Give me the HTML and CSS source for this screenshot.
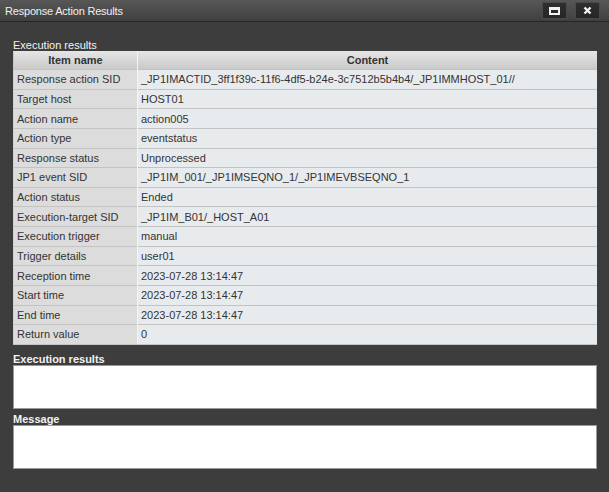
FILE: index.html
```html
<!DOCTYPE html>
<html>
<head>
<meta charset="utf-8">
<link rel="stylesheet" href="styles.css">
</head>
<body>
<div class="window">
  <div class="titlebar">
    <span class="title">Response Action Results</span>
    <div class="tbtns">
      <div class="tbtn"><span class="max-ico"></span></div>
      <div class="tbtn">
        <svg width="9" height="9" viewBox="0 0 9 9"><path d="M1.5 1.5 L7.5 7.5 M7.5 1.5 L1.5 7.5" stroke="#f2f2f2" stroke-width="2.4" stroke-linecap="butt"/></svg>
      </div>
    </div>
  </div>
  <div class="content">
    <div class="label top-label">Execution results</div>
    <table class="grid">
      <thead>
        <tr><th class="c1">Item name</th><th>Content</th></tr>
      </thead>
      <tbody>
        <tr><td class="c1">Response action SID</td><td>_JP1IMACTID_3ff1f39c-11f6-4df5-b24e-3c7512b5b4b4/_JP1IMMHOST_01//</td></tr>
        <tr><td class="c1">Target host</td><td>HOST01</td></tr>
        <tr><td class="c1">Action name</td><td>action005</td></tr>
        <tr><td class="c1">Action type</td><td>eventstatus</td></tr>
        <tr><td class="c1">Response status</td><td>Unprocessed</td></tr>
        <tr><td class="c1">JP1 event SID</td><td>_JP1IM_001/_JP1IMSEQNO_1/_JP1IMEVBSEQNO_1</td></tr>
        <tr><td class="c1">Action status</td><td>Ended</td></tr>
        <tr><td class="c1">Execution-target SID</td><td>_JP1IM_B01/_HOST_A01</td></tr>
        <tr><td class="c1">Execution trigger</td><td>manual</td></tr>
        <tr><td class="c1">Trigger details</td><td>user01</td></tr>
        <tr><td class="c1">Reception time</td><td>2023-07-28 13:14:47</td></tr>
        <tr><td class="c1">Start time</td><td>2023-07-28 13:14:47</td></tr>
        <tr><td class="c1">End time</td><td>2023-07-28 13:14:47</td></tr>
        <tr><td class="c1">Return value</td><td>0</td></tr>
      </tbody>
    </table>
    <div class="label bold sec-label">Execution results</div>
    <div class="box"></div>
    <div class="label bold sec-label2">Message</div>
    <div class="box"></div>
  </div>
</div>
</body>
</html>
```

FILE: styles.css
```css
html, body {
  margin: 0;
  padding: 0;
  background: #3c3c3c;
}
body {
  font-family: "Liberation Sans", Arial, sans-serif;
  font-size: 11px;
}
.window {
  width: 609px;
  height: 492px;
  background: #3d3d3d;
  display: flex;
  flex-direction: column;
  overflow: hidden;
}
.titlebar {
  height: 21px;
  flex: none;
  background: linear-gradient(#575757, #404040);
  border-bottom: 1px solid #262626;
  display: flex;
  align-items: center;
  justify-content: space-between;
  padding: 0 9px 0 5px;
}
.title {
  color: #f0f0f0;
  font-size: 11px;
  letter-spacing: -0.2px;
}
.tbtns {
  display: flex;
  gap: 8px;
  align-self: flex-start;
  margin-top: 2px;
}
.tbtn {
  width: 25px;
  height: 17px;
  box-sizing: border-box;
  background: linear-gradient(#2f2f2f, #252525);
  border: 1px solid #4a4a4a;
  display: flex;
  align-items: center;
  justify-content: center;
}
.max-ico {
  width: 11px;
  height: 8px;
  box-sizing: border-box;
  border: 2px solid #f2f2f2;
  border-top-width: 3px;
}
.content {
  padding: 0 12px 0 13px;
  display: flex;
  flex-direction: column;
}
.label {
  color: #f2f2f2;
  font-size: 11px;
  line-height: 12px;
}
.bold { font-weight: bold; }
.top-label {
  margin-top: 17px;
  margin-bottom: 0;
}
.grid {
  width: 584px;
  border-collapse: collapse;
  table-layout: fixed;
}
.grid th {
  height: 18px;
  background: linear-gradient(#e6e6e6, #c9c9c9);
  color: #333;
  font-weight: bold;
  font-size: 11px;
  text-align: center;
  border-left: 1px solid #f4f4f4;
  padding: 0;
}
.grid th.c1 { border-left: 1px solid #c9c9c9; width: 123px; }
.grid td {
  height: 18.64px;
  padding: 0 0 0 3px;
  color: #333;
  background: #e8ebee;
  border-top: 1px solid #c3c3c3;
  border-left: 1px solid #f4f4f4;
  white-space: nowrap;
  overflow: hidden;
}
.grid td.c1 {
  background: #dcdcdc;
  border-left: 1px solid #d0d0d0;
}
.grid tbody tr:last-child td { border-bottom: 1px solid #c3c3c3; }
.sec-label { margin-top: 8px; }
.sec-label2 { margin-top: 4px; }
.box {
  width: 584px;
  height: 44px;
  box-sizing: border-box;
  background: #ffffff;
  border: 1px solid #9a9a9a;
}
```
